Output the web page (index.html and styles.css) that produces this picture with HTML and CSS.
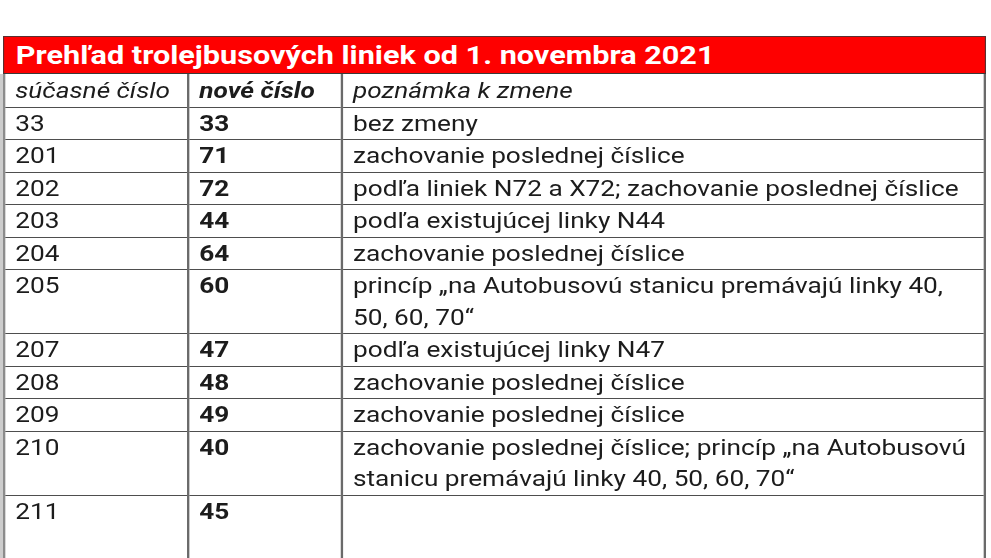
FILE: index.html
```html
<!DOCTYPE html>
<html lang="sk">
<head>
<meta charset="utf-8">
<title>Prehľad trolejbusových liniek</title>
<link rel="stylesheet" href="styles.css">
</head>
<body>
<div class="sheet">
  <div class="title">Prehľad trolejbusových liniek od 1. novembra 2021</div>
  <table class="lines">
    <colgroup>
      <col class="c-old">
      <col class="c-new">
      <col class="c-note">
    </colgroup>
    <thead>
      <tr>
        <th class="h-old">súčasné číslo</th>
        <th class="h-new">nové číslo</th>
        <th class="h-note">poznámka k zmene</th>
      </tr>
    </thead>
    <tbody>
      <tr><td>33</td><td class="num">33</td><td>bez zmeny</td></tr>
      <tr><td>201</td><td class="num">71</td><td>zachovanie poslednej číslice</td></tr>
      <tr><td>202</td><td class="num">72</td><td>podľa liniek N72 a X72; zachovanie poslednej číslice</td></tr>
      <tr><td>203</td><td class="num">44</td><td>podľa existujúcej linky N44</td></tr>
      <tr><td>204</td><td class="num">64</td><td>zachovanie poslednej číslice</td></tr>
      <tr><td>205</td><td class="num">60</td><td>princíp „na Autobusovú stanicu premávajú linky 40,<br>50, 60, 70“</td></tr>
      <tr><td>207</td><td class="num">47</td><td>podľa existujúcej linky N47</td></tr>
      <tr><td>208</td><td class="num">48</td><td>zachovanie poslednej číslice</td></tr>
      <tr><td>209</td><td class="num">49</td><td>zachovanie poslednej číslice</td></tr>
      <tr><td>210</td><td class="num">40</td><td>zachovanie poslednej číslice; princíp „na Autobusovú<br>stanicu premávajú linky 40, 50, 60, 70“</td></tr>
      <tr class="last"><td>211</td><td class="num">45</td><td></td></tr>
    </tbody>
  </table>
</div>
</body>
</html>
```

FILE: styles.css
```css
html, body {
  margin: 0;
  padding: 0;
  background: #ffffff;
  overflow: hidden;
}

body {
  font-family: Roboto, "Liberation Sans", sans-serif;
  color: #1c1c1c;
}

/* the source image is stretched horizontally; reproduce that */
.sheet {
  margin: 36px 0 0 3px;
  width: 844px;
  transform: scaleX(1.1647);
  transform-origin: 0 0;
}

.title {
  background: #fe0000;
  color: #ffffff;
  font-weight: 700;
  font-size: 26.3px;
  line-height: 37px;
  height: 36px;
  padding: 0 10px;
  border: 1px solid #5a3030;
  border-bottom: 1px solid #3a3a3a;
  white-space: nowrap;
  overflow: hidden;
}

.lines {
  width: 100%;
  border-collapse: collapse;
  table-layout: fixed;
  font-size: 22.5px;
  line-height: 31.5px;
  box-shadow: -3px 0 0 #cdcdcd;
}

.c-old { width: 158px; }
.c-new { width: 132px; }
.c-note { width: auto; }

.lines th,
.lines td {
  text-align: left;
  vertical-align: top;
  padding: 0 8px 0 8.5px;
  border-left: 2px solid #8c8c8c;
  border-right: 2px solid #6a6a6a;
  border-bottom: 1px solid #4e4e4e;
  white-space: nowrap;
}

.lines th {
  font-style: italic;
  font-weight: 400;
  padding-top: 1px;
}

.lines th.h-new {
  font-weight: 700;
}

.lines td.num {
  font-weight: 700;
}

.lines tr.last td {
  height: 90px;
}
```
